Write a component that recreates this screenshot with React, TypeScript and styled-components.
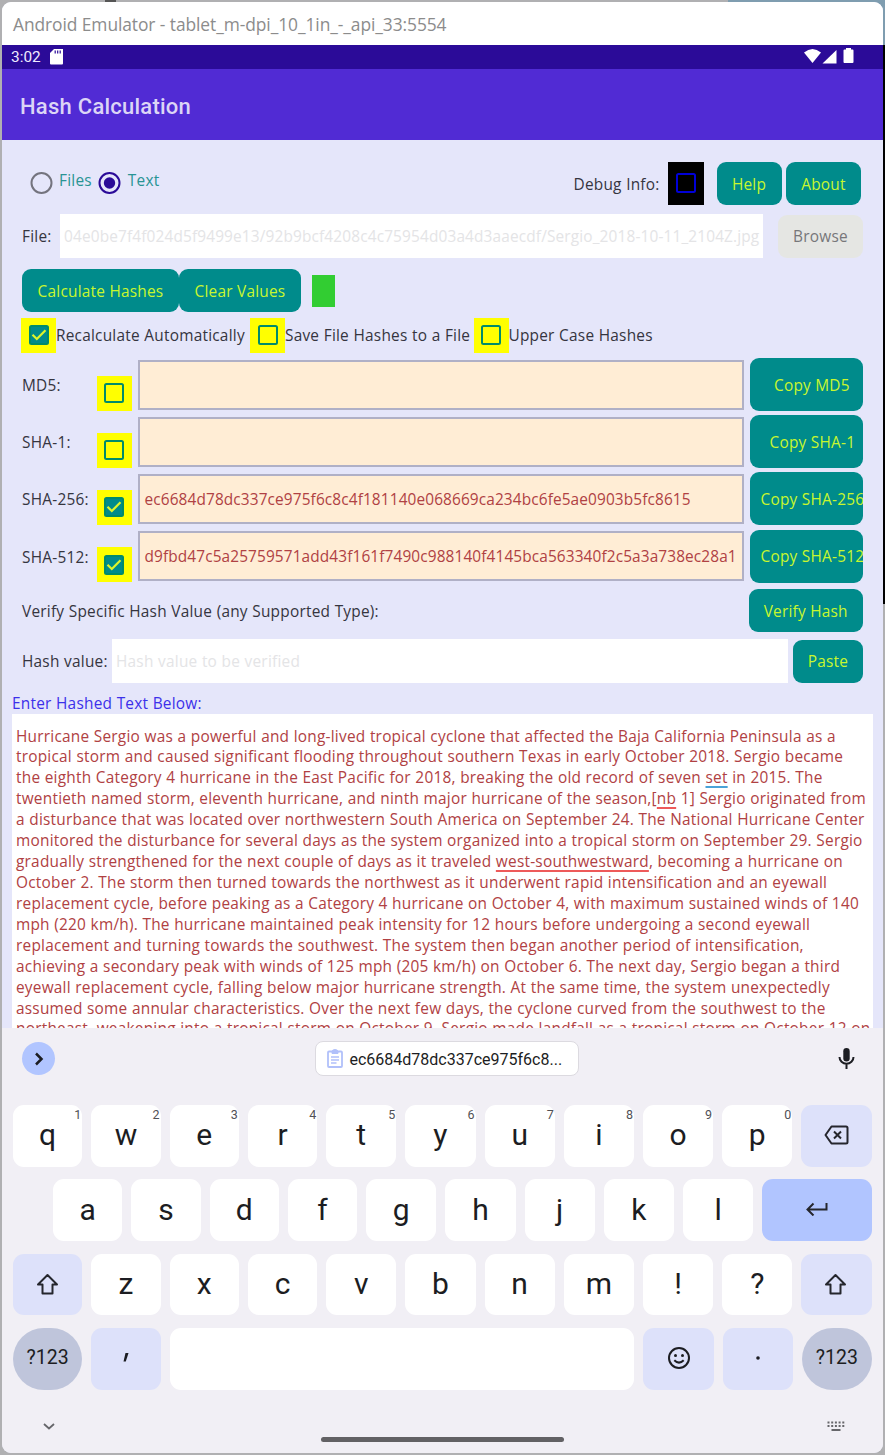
import React from 'react';
import styled, { createGlobalStyle } from 'styled-components';

const GlobalStyle = createGlobalStyle`
  * { box-sizing: border-box; }
  html, body { margin: 0; padding: 0; }
  body { width: 885px; height: 1455px; overflow: hidden; }
`;

const Desktop = styled.div`
  width: 885px;
  height: 1455px;
  padding: 2px;
  background:
    linear-gradient(#7f9db0, #7f9db0) 100% 0 / 157px 45px no-repeat,
    linear-gradient(#555, #555) 105px 0 / 11px 2px no-repeat,
    linear-gradient(#000, #000) 100% 45px / 2px 559px no-repeat,
    #b0b0b2;
`;

const Window = styled.div`
  height: 1451px;
  width: 881px;
  border-radius: 9px;
  overflow: hidden;
  display: flex;
  flex-direction: column;
  background: #e5e6fa;
  font-family: 'Open Sans', sans-serif;
  font-size: 15.4px;
  letter-spacing: 0.23px;
  word-spacing: 0.25px;
  color: #35353f;
`;

const TitleBar = styled.div`
  height: 43px;
  flex: none;
  display: flex;
  align-items: center;
  padding-left: 11px;
  background: #fff;
  color: #8c8c8c;
  font-size: 17.4px;
  letter-spacing: -0.08px;
  word-spacing: 0;
  white-space: nowrap;
`;

const StatusBar = styled.div`
  height: 24px;
  flex: none;
  display: flex;
  align-items: center;
  padding: 0 29px 1px 9px;
  background: #2b0b98;
  color: #efeaff;
  font: 400 15.4px Roboto, sans-serif;
  letter-spacing: 0;
`;

const StatusIcons = styled.div`
  display: flex;
  align-items: center;
  margin: -2px 0 0 auto;
`;

const AppBar = styled.div`
  height: 71px;
  flex: none;
  display: flex;
  align-items: center;
  padding: 3px 0 0 18px;
  background: #512bd4;
  color: #dcd5f6;
  font: 500 22px Roboto, sans-serif;
  letter-spacing: 0.22px;
`;

const Body = styled.main`
  height: 888px;
  flex: none;
  padding: 22px 20px 0;
  overflow: hidden;
  white-space: nowrap;
`;

const Row = styled.div<{ $h: number; $mt?: number }>`
  display: flex;
  align-items: center;
  height: ${(p) => p.$h}px;
  margin-top: ${(p) => p.$mt ?? 0}px;
`;

const HashRow = styled(Row)`
  margin-bottom: 4.2px;
`;

const Button = styled.button<{ $w: number; $h?: number; $ml?: number; $disabled?: boolean }>`
  flex: none;
  width: ${(p) => p.$w}px;
  height: ${(p) => p.$h ?? 43}px;
  margin: 0 0 0 ${(p) => p.$ml ?? 0}px;
  padding: 1px 0 0;
  border: 0;
  border-radius: 9px;
  background: ${(p) => (p.$disabled ? '#e5e6e3' : '#008b8b')};
  color: ${(p) => (p.$disabled ? '#77777a' : '#c8f72e')};
  font: inherit;
  letter-spacing: inherit;
  white-space: nowrap;
  overflow: hidden;
`;

const CopyButton = styled(Button)<{ $pad: number }>`
  padding: 1px 0 0 ${(p) => p.$pad}px;
  text-align: left;
`;

const RadioText = styled.span<{ $l: number; $r?: number }>`
  color: #299494;
  margin: -7px ${(p) => p.$r ?? 0}px 0 ${(p) => p.$l}px;
`;

const Spacer = styled.span`
  flex: 1;
`;

const Text = styled.span`
  padding-top: 1px;
`;

const DebugBox = styled.div`
  width: 36px;
  height: 43px;
  margin: 0 13px 0 8px;
  padding-bottom: 1px;
  display: flex;
  align-items: center;
  justify-content: center;
  background: #000;
`;

const CheckTile = styled.div<{ $ml?: number; $mt?: number }>`
  flex: none;
  width: 35px;
  height: 35px;
  margin: ${(p) => p.$mt ?? 0}px 0 0 ${(p) => p.$ml ?? 0}px;
  display: flex;
  align-items: center;
  justify-content: center;
  background: #ff0;
`;

const OptionText = styled(Text)<{ $w: number }>`
  flex: none;
  width: ${(p) => p.$w}px;
`;

const Field = styled.div`
  flex: 1;
  height: 44px;
  padding-left: 4px;
  line-height: 45px;
  letter-spacing: 0.15px;
  background: #fff;
  color: #e4e4e6;
  overflow: hidden;
`;

const SpacedText = styled.span`
  letter-spacing: 0.23px;
`;

const Indicator = styled.div`
  width: 23px;
  height: 32px;
  margin-left: 11px;
  background: #32cd32;
`;

const HashName = styled(Text)`
  width: 74.5px;
  padding-top: 2px;
  flex: none;
`;

const HashOutput = styled.div`
  flex: none;
  width: 606.5px;
  height: 50px;
  margin: 0 6px 0 6px;
  padding-left: 5px;
  border: 2px solid #b0b0c6;
  background: #ffedd5;
  color: #b04143;
  line-height: 47px;
  letter-spacing: 0.12px;
  overflow: hidden;
`;

const EditorLabel = styled.div`
  margin: 10px 0 0 -10px;
  height: 21px;
  line-height: 22px;
  color: #3c30ea;
`;

const Editor = styled.div`
  width: 861px;
  height: 314px;
  margin-left: -10px;
  padding: 12.5px 4px 0;
  background: #fff;
  color: #b04143;
  line-height: 20.92px;
  overflow: hidden;
`;

const Spell = styled.span<{ $c: string }>`
  text-decoration: underline 2px ${(p) => p.$c};
  text-underline-offset: 3px;
`;

const Keyboard = styled.section`
  flex: 1;
  display: flex;
  flex-direction: column;
  padding: 0 11px;
  background: #f1eff5;
  color: #1c1d22;
  font-family: Roboto, sans-serif;
  letter-spacing: 0;
`;

const Suggestions = styled.div`
  height: 61px;
  display: flex;
  align-items: center;
  padding: 0 17px 0 9px;
  justify-content: space-between;
`;

const Expand = styled.div`
  width: 33px;
  height: 33px;
  border-radius: 50%;
  background: #b1c5ff;
  display: flex;
  align-items: center;
  justify-content: center;
`;

const Chip = styled.div`
  width: 264px;
  height: 35px;
  padding-left: 11px;
  display: flex;
  align-items: center;
  gap: 7px;
  border: 1px solid #dcdae0;
  border-radius: 8px;
  background: #fff;
  font-size: 16px;
  white-space: nowrap;
`;

const ChipText = styled.span`
  padding-top: 2px;
`;

const KeyRows = styled.div`
  display: flex;
  flex-direction: column;
  gap: 12.9px;
  margin-top: 16px;
`;

const tones = { plain: '#fff', soft: '#dde1fa', enter: '#b1c5ff', mode: '#bfc5db' };

const Key = styled.div<{ $tone?: keyof typeof tones; $grow?: boolean }>`
  position: relative;
  flex: ${(p) => (p.$grow ? '1 1 0' : '0 0 70.2px')};
  display: flex;
  align-items: center;
  justify-content: center;
  padding-bottom: 2px;
  border-radius: ${(p) => (p.$tone === 'mode' ? '31px' : '11px')};
  background: ${(p) => tones[p.$tone ?? 'plain']};
  font-size: ${(p) => (p.$tone === 'mode' ? 19.5 : 30)}px;
`;

const KeyRow = styled.div<{ $indent?: number; $narrow?: number }>`
  display: flex;
  gap: 9px;
  height: 61.5px;
  padding-left: ${(p) => p.$indent ?? 0}px;
  & > ${Key}:nth-child(-n + ${(p) => p.$narrow ?? 4}) {
    flex-basis: 69.3px;
  }
`;

const Hint = styled.span`
  position: absolute;
  top: 2px;
  right: 1px;
  font-size: 12.5px;
  line-height: 15px;
  color: #505056;
`;

const NavBar = styled.div`
  flex: 1;
  display: flex;
  align-items: flex-start;
  justify-content: space-between;
  padding: 28px 27px 0 30px;
`;

const HomeHandle = styled.div`
  width: 243px;
  height: 5px;
  margin: 19px 0 0 3px;
  border-radius: 3px;
  background: #626164;
`;

const Radio = ({ on }: { on?: boolean }) => (
  <svg width="24" height="24" viewBox="0 0 24 24" fill="none">
    <circle cx="12.5" cy="11" r="10" stroke={on ? '#2b0b98' : '#74747e'} strokeWidth="2" />
    {on && <circle cx="12.5" cy="11" r="5.7" fill="#2b0b98" />}
  </svg>
);

const Box = ({ on, color = '#008b6b' }: { on?: boolean; color?: string }) => (
  <svg width="22" height="22" viewBox="0 0 22 22" fill="none">
    <rect x="2" y="2" width="18" height="18" rx="1.5" stroke={color} strokeWidth="2" fill={on ? '#008b8b' : 'none'} />
    {on && <path d="M4.5 10.8 8.8 15 17.5 6.3" stroke="#ddf52a" strokeWidth="2.2" />}
  </svg>
);

const ShiftIcon = () => (
  <svg width="24" height="24" viewBox="0 0 24 24" fill="none" stroke="#25262d" strokeWidth="2" strokeLinejoin="round">
    <path d="M11.5 3 2 12.5H6.5v9h10v-9h4.5Z" />
  </svg>
);

const hashes = [
  { name: 'MD5', value: '', pad: 24 },
  { name: 'SHA-1', value: '', pad: 19.5 },
  { name: 'SHA-256', value: 'ec6684d78dc337ce975f6c8c4f181140e068669ca234bc6fe5ae0903b5fc8615', pad: 10.5 },
  { name: 'SHA-512', value: 'd9fbd47c5a25759571add43f161f7490c988140f4145bca563340f2c5a3a738ec28a1', pad: 10.5 },
];

const lines: React.ReactNode[] = [
  'Hurricane Sergio was a powerful and long-lived tropical cyclone that affected the Baja California Peninsula as a',
  'tropical storm and caused significant flooding throughout southern Texas in early October 2018. Sergio became',
  <>the eighth Category 4 hurricane in the East Pacific for 2018, breaking the old record of seven <Spell $c="#4aa3d8">set</Spell> in 2015. The</>,
  <>twentieth named storm, eleventh hurricane, and ninth major hurricane of the season,[<Spell $c="#ee5a5a">nb</Spell> 1] Sergio originated from</>,
  'a disturbance that was located over northwestern South America on September 24. The National Hurricane Center',
  'monitored the disturbance for several days as the system organized into a tropical storm on September 29. Sergio',
  <>gradually strengthened for the next couple of days as it traveled <Spell $c="#ee5a5a">west-southwestward</Spell>, becoming a hurricane on</>,
  'October 2. The storm then turned towards the northwest as it underwent rapid intensification and an eyewall',
  'replacement cycle, before peaking as a Category 4 hurricane on October 4, with maximum sustained winds of 140',
  'mph (220 km/h). The hurricane maintained peak intensity for 12 hours before undergoing a second eyewall',
  'replacement and turning towards the southwest. The system then began another period of intensification,',
  'achieving a secondary peak with winds of 125 mph (205 km/h) on October 6. The next day, Sergio began a third',
  'eyewall replacement cycle, falling below major hurricane strength. At the same time, the system unexpectedly',
  'assumed some annular characteristics. Over the next few days, the cyclone curved from the southwest to the',
  'northeast, weakening into a tropical storm on October 9. Sergio made landfall as a tropical storm on October 12 on',
];

export default function App() {
  return (
    <Desktop>
      <GlobalStyle />
      <Window>
        <TitleBar>Android Emulator - tablet_m-dpi_10_1in_-_api_33:5554</TitleBar>
        <StatusBar>
          3:02
          <svg width="22" height="16" viewBox="-9 0.5 22 16">
            <path fill="#fff" d="M4.5 0H12a1 1 0 0 1 1 1v14a1 1 0 0 1-1 1H1a1 1 0 0 1-1-1V4.5Z" />
            <path stroke="#2b0b98" strokeWidth="1.2" d="M5.2 2v3M7.7 2v3M10.2 2v3" />
          </svg>
          <StatusIcons>
            <svg width="50" height="16" viewBox="0 0 50 16" fill="#fff">
              <path d="M0 4.5Q8.5-2.5 17 4.5L8.5 15Z" />
              <path d="M18.5 15.5 32.5 2v13.5Z" />
              <path d="M42 1.5V0h5v1.5h1.5a1 1 0 0 1 1 1V14a1 1 0 0 1-1 1h-8a1 1 0 0 1-1-1V2.5a1 1 0 0 1 1-1Z" />
            </svg>
          </StatusIcons>
        </StatusBar>
        <AppBar>Hash Calculation</AppBar>
        <Body>
          <Row $h={43}>
            <svg width="7" height="1" />
            <Radio />
            <RadioText $l={6} $r={5.5}>Files</RadioText>
            <Radio on />
            <RadioText $l={6.5}>Text</RadioText>
            <Spacer />
            <Text>Debug Info:</Text>
            <DebugBox><Box color="#0000d8" /></DebugBox>
            <Button $w={65}>Help</Button>
            <Button $w={75} $ml={4.5}>About</Button>
            <svg width="2" height="1" />
          </Row>
          <Row $h={44} $mt={9}>
            <OptionText $w={38}>File:</OptionText>
            <Field>04e0be7f4f024d5f9499e13/92b9bcf4208c4c75954d03a4d3aaecdf/Sergio_2018-10-11_2104Z.jpg</Field>
            <Button $w={85} $ml={15} $disabled>Browse</Button>
          </Row>
          <Row $h={43} $mt={11}>
            <Button $w={157}>Calculate Hashes</Button>
            <Button $w={122}>Clear Values</Button>
            <Indicator />
          </Row>
          <Row $h={35} $mt={5.5}>
            <CheckTile $ml={-1}><Box on /></CheckTile>
            <OptionText $w={194}>Recalculate Automatically</OptionText>
            <CheckTile><Box /></CheckTile>
            <OptionText $w={188.5}>Save File Hashes to a File</OptionText>
            <CheckTile><Box /></CheckTile>
            <Text>Upper Case Hashes</Text>
          </Row>
          <Row $h={5.5} />
          {hashes.map((h) => (
            <HashRow $h={53} key={h.name}>
              <HashName>{h.name}:</HashName>
              <CheckTile $mt={17}><Box on={h.value !== ''} /></CheckTile>
              <HashOutput>{h.value}</HashOutput>
              <CopyButton $w={113} $h={53} $pad={h.pad}>Copy {h.name}</CopyButton>
            </HashRow>
          ))}
          <Row $h={43} $mt={6.5}>
            <Text>Verify Specific Hash Value (any Supported Type):</Text>
            <Spacer />
            <Button $w={114.5}>Verify Hash</Button>
          </Row>
          <Row $h={44} $mt={7}>
            <OptionText $w={90}>Hash value:</OptionText>
            <Field><SpacedText>Hash value to be verified</SpacedText></Field>
            <Button $w={70} $ml={5}>Paste</Button>
          </Row>
          <EditorLabel>Enter Hashed Text Below:</EditorLabel>
          <Editor>
            {lines.map((line, i) => <div key={i}>{line}</div>)}
          </Editor>
        </Body>
        <Keyboard>
          <Suggestions>
            <Expand>
              <svg width="14" height="16" viewBox="0 0 14 16" fill="none" stroke="#1c1d22" strokeWidth="2.5">
                <path d="m4 2.500 5.5 5.5L4 13.5" />
              </svg>
            </Expand>
            <Chip>
              <svg width="16" height="19" viewBox="0 0 16 19" fill="none" stroke="#b1c0fa">
                <rect x="1" y="2.5" width="14" height="15.5" rx="1" strokeWidth="1.8" />
                <path d="M5 3a3 2.5 0 0 1 6 0v1.5H5Z" fill="#b1c0fa" strokeWidth="1" />
                <path d="M4 8h8M4 11h8M4 14h5.5" strokeWidth="1.4" />
              </svg>
              <ChipText>ec6684d78dc337ce975f6c8...</ChipText>
            </Chip>
            <svg width="17" height="22" viewBox="0 0 17 22" fill="none" stroke="#1c1d22">
              <rect x="5.3" y="0" width="6.4" height="13.5" rx="3.2" fill="#1c1d22" stroke="none" />
              <path d="M1.5 9a7 6.8 0 0 0 14 0M8.5 16V21" strokeWidth="2" />
            </svg>
          </Suggestions>
          <KeyRows>
            <KeyRow>
              {'qwertyuiop'.split('').map((k, i) => (
                <Key key={k}>{k}<Hint>{(i + 1) % 10}</Hint></Key>
              ))}
              <Key $tone="soft">
                <svg width="25" height="20" viewBox="0 0 25 20" fill="none" stroke="#25262d" strokeWidth="2" strokeLinejoin="round">
                  <path d="M7.5 1.5H22a1.5 1.5 0 0 1 1.5 1.5v14a1.5 1.5 0 0 1-1.5 1.5H7.5L1.5 10Z" />
                  <path d="m10 6.500 7 7M17 6.500l-7 7" />
                </svg>
              </Key>
            </KeyRow>
            <KeyRow $indent={40}>
              {'asdfghjkl'.split('').map((k) => <Key key={k}>{k}</Key>)}
              <Key $tone="enter" $grow>
                <svg width="22" height="14" viewBox="0 0 22 14" fill="none" stroke="#25262d" strokeWidth="2">
                  <path d="M20.5 1v6.5H2M7.5 1.5l-6 6 6 6" />
                </svg>
              </Key>
            </KeyRow>
            <KeyRow>
              <Key $tone="soft"><ShiftIcon /></Key>
              {'zxcvbnm!?'.split('').map((k) => <Key key={k}>{k}</Key>)}
              <Key $tone="soft"><ShiftIcon /></Key>
            </KeyRow>
            <KeyRow $narrow={2}>
              <Key $tone="mode">?123</Key>
              <Key $tone="soft">
                <svg width="6" height="9" viewBox="0 0 6 9"><path d="M2.5 0H5.5L2.8 8.5H.5Z" fill="#1c1d22" /></svg>
              </Key>
              <Key $grow />
              <Key $tone="soft">
                <svg width="24" height="24" viewBox="0 0 24 24" fill="none" stroke="#1c1d22" strokeWidth="2">
                  <circle cx="12" cy="12" r="10" />
                  <path d="M7.3 14.3Q12 19 16.7 14.3" />
                  <circle cx="8.5" cy="9.5" r="1.5" fill="#1c1d22" stroke="none" />
                  <circle cx="15.5" cy="9.5" r="1.5" fill="#1c1d22" stroke="none" />
                </svg>
              </Key>
              <Key $tone="soft">
                <svg width="4" height="4" viewBox="0 0 4 4"><circle cx="2" cy="2" r="1.8" fill="#1c1d22" /></svg>
              </Key>
              <Key $tone="mode">?123</Key>
            </KeyRow>
          </KeyRows>
          <NavBar>
            <svg width="12" height="16" viewBox="0 0 12 16" fill="none" stroke="#66666a" strokeWidth="1.8">
              <path d="m1 6 5 4.5L11 6" />
            </svg>
            <HomeHandle />
            <svg width="18" height="16" viewBox="0 0 18 16" fill="none" stroke="#66666a">
              <path d="M.5 4.5h17M.5 8h17" strokeWidth="1.8" strokeDasharray="2 1.7" />
              <path d="M4.5 12h9" strokeWidth="1.8" />
            </svg>
          </NavBar>
        </Keyboard>
      </Window>
    </Desktop>
  );
}
